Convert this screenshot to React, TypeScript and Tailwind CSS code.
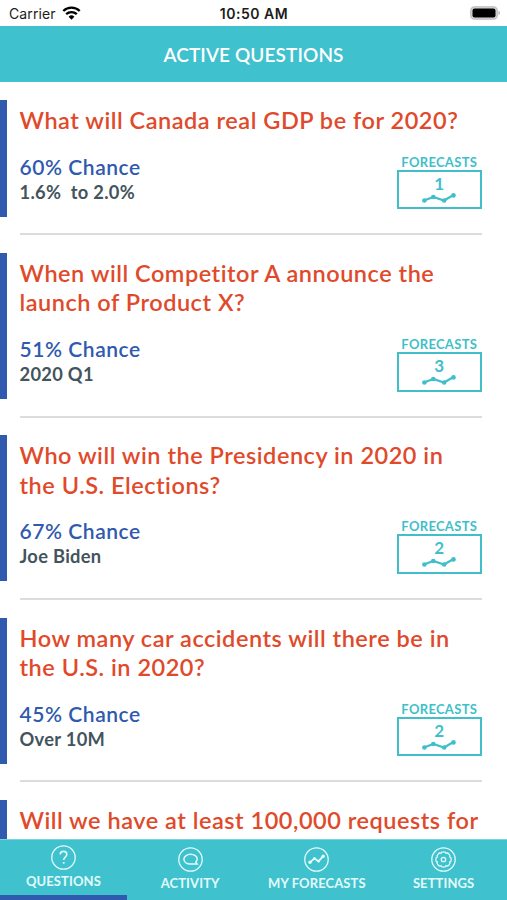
import type { ReactNode } from "react";

type Question = {
  title: string[];
  chance?: string;
  outcome?: string;
  forecasts?: number;
};

const questions: Question[] = [
  {
    title: ["What will Canada real GDP be for 2020?"],
    chance: "60% Chance",
    outcome: "1.6%  to 2.0%",
    forecasts: 1,
  },
  {
    title: ["When will Competitor A announce the", "launch of Product X?"],
    chance: "51% Chance",
    outcome: "2020 Q1",
    forecasts: 3,
  },
  {
    title: ["Who will win the Presidency in 2020 in", "the U.S. Elections?"],
    chance: "67% Chance",
    outcome: "Joe Biden",
    forecasts: 2,
  },
  {
    title: ["How many car accidents will there be in", "the U.S. in 2020?"],
    chance: "45% Chance",
    outcome: "Over 10M",
    forecasts: 2,
  },
  {
    title: ["Will we have at least 100,000 requests for"],
  },
];

export default function App() {
  return (
    <div className="flex h-[900px] w-[507px] flex-col overflow-hidden bg-white font-['Lato',sans-serif]">
      <StatusBar />
      <header className="flex h-[56px] shrink-0 items-center justify-center bg-[#40c1ce] pt-[4px]">
        <h1 className="text-[19px] font-semibold tracking-[0.1px] text-white">
          ACTIVE QUESTIONS
        </h1>
      </header>

      <main className="min-h-0 flex-1 overflow-hidden pt-[18.6px]">
        {questions.map((q) => (
          <QuestionRow key={q.title[0]} question={q} />
        ))}
      </main>

      <nav className="grid h-[61.5px] shrink-0 grid-cols-4 border-t border-[#7dd3dc] bg-[#40c1ce]">
        <Tab label="QUESTIONS" active>
          <path d="M9.2 9.6c0-1.9 1.4-3.2 3.3-3.2s3.3 1.2 3.3 3c0 2.5-3.1 2.8-3.1 5.6" strokeWidth="1.6" />
          <path d="M12.7 17v1.7" strokeWidth="1.7" />
        </Tab>
        <Tab label="ACTIVITY">
          <path d="M19.2 17.1h-6.8c-3.8 0-6.5-2.1-6.5-4.8s2.9-5 6.6-5 6.7 2.1 6.7 4.8c0 1.3-.6 2.2-1.4 3z" strokeWidth="1.5" />
        </Tab>
        <Tab label="MY FORECASTS">
          <path d="M6 15.3 10.4 11.4 14.6 14.2 19.2 9.2" strokeWidth="1.8" />
          <g fill="currentColor" stroke="none">
            <circle cx="6" cy="15.3" r="1.7" />
            <circle cx="10.4" cy="11.4" r="1.3" />
            <circle cx="14.6" cy="14.2" r="1.3" />
            <circle cx="19.2" cy="9.2" r="1.7" />
          </g>
        </Tab>
        <Tab label="SETTINGS">
          <path d="M12.5 4.8Q14.8 4.8 15.1 6.3 16.4 5.5 18 7.1 19.5 8.6 18.7 9.9 20.2 10.2 20.2 12.5 20.2 14.8 18.7 15.1 19.5 16.4 18 18 16.4 19.5 15.1 18.7 14.8 20.2 12.5 20.2 10.2 20.2 9.9 18.7 8.6 19.5 7.1 18 5.5 16.4 6.3 15.1 4.8 14.8 4.8 12.5 4.8 10.2 6.3 9.9 5.5 8.6 7.1 7.1 8.6 5.5 9.9 6.3 10.2 4.8 12.5 4.8z" />
          <circle cx="12.5" cy="12.5" r="2.2" />
        </Tab>
      </nav>
    </div>
  );
}

function StatusBar() {
  return (
    <div className="grid h-[25.5px] shrink-0 grid-cols-3 items-center pt-[2px] pr-[6px] pl-[9px] font-['Inter',sans-serif] text-[#1c1c1c]">
      <div className="flex items-center gap-[6px]">
        <span className="text-[14px] tracking-[0.1px]">Carrier</span>
        <svg viewBox="0 0 20 15" className="-mt-[2px] h-[14px] w-[19px]" fill="none" stroke="#000" strokeWidth="2.5">
          <path d="M1.2 5.4a12.6 12.6 0 0 1 17.6 0" />
          <path d="M4.3 8.8a8.2 8.2 0 0 1 11.4 0" />
          <path d="M10 14.6 6.9 11.4a4.5 4.5 0 0 1 6.2 0z" fill="#000" stroke="none" />
        </svg>
      </div>
      <span className="pr-[2px] text-center text-[14px] font-semibold tracking-[0.5px] whitespace-nowrap">
        10:50 AM
      </span>
      <svg viewBox="0 0 31 14" className="-mt-[2px] h-[14px] w-[31px] justify-self-end">
        <rect x="0.8" y="0.8" width="26.4" height="12.4" rx="3.6" fill="#d8d8d8" stroke="#bdbdbd" strokeWidth="1.3" />
        <rect x="2.5" y="2.5" width="23" height="9" rx="2" fill="#000" />
        <path d="M28.5 4.8c1.9.7 1.9 3.7 0 4.4z" fill="#b5b5b5" />
      </svg>
    </div>
  );
}

function QuestionRow({ question }: { question: Question }) {
  return (
    <section className="mb-[17.7px]">
      <div className="border-l-[7px] border-[#2f5aae] pt-[6px] pr-[25px] pb-[10.5px] pl-[12.5px]">
        <h2 className="text-[23.5px] leading-[29.3px] font-semibold tracking-[0.52px] whitespace-nowrap text-[#e04a2b]">
          {question.title.map((line) => (
            <span key={line} className="block">
              {line}
            </span>
          ))}
        </h2>
        {question.chance && (
          <div className="mt-[17.5px] flex h-[53.5px] justify-between">
            <div>
              <p className="text-[21px] leading-[28px] font-semibold tracking-[0.55px] text-[#2f5aae]">
                {question.chance}
              </p>
              <p className="text-[18.3px] leading-[23px] font-bold tracking-[0.3px] whitespace-pre text-[#43545c]">
                {question.outcome}
              </p>
            </div>
            <ForecastsButton count={question.forecasts} />
          </div>
        )}
      </div>
      {question.chance && (
        <div className="mt-[16.5px] mr-[25px] ml-[19.5px] h-[2px] bg-[#dcdcdc]" />
      )}
    </section>
  );
}

function ForecastsButton({ count }: { count?: number }) {
  return (
    <div className="flex w-[85.5px] flex-col items-center text-[#40bfcb]">
      <span className="mt-[2px] text-[13px] leading-[15px] font-bold tracking-[0.3px]">
        FORECASTS
      </span>
      <div className="flex h-[39.5px] w-full shrink-0 flex-col items-center border-2 border-[#40bfcb] pt-[3px]">
        <span className="text-[17px] leading-[18px] font-bold">{count}</span>
        <svg viewBox="0 0 34 10" className="h-[10px] w-[34px] shrink-0" fill="currentColor">
          <path d="M2 7.5 11.3 4 22 7.5 31.5 2" fill="none" stroke="currentColor" strokeWidth="2.2" />
          <circle cx="2.4" cy="7.5" r="2.3" />
          <circle cx="11.3" cy="4" r="2.3" />
          <circle cx="22.2" cy="7.5" r="2.3" />
          <circle cx="31.5" cy="2.4" r="2.3" />
        </svg>
      </div>
    </div>
  );
}

function Tab({
  label,
  active,
  children,
}: {
  label: string;
  active?: boolean;
  children: ReactNode;
}) {
  return (
    <div
      className={`flex flex-col items-center text-[#e2fbfb] ${
        active ? "border-b-[5px] border-[#2f5aae] pt-[5px]" : "pt-[7.5px]"
      }`}
    >
      <svg
        viewBox="0 0 25 25"
        className="h-[25px] w-[25px] shrink-0"
        fill="none"
        stroke="currentColor"
        strokeWidth="1.3"
      >
        <circle cx="12.5" cy="12.5" r="11.7" />
        {children}
      </svg>
      <span className="mt-[3px] text-[13px] leading-[16px] font-bold tracking-[0.1px] whitespace-nowrap">
        {label}
      </span>
    </div>
  );
}
